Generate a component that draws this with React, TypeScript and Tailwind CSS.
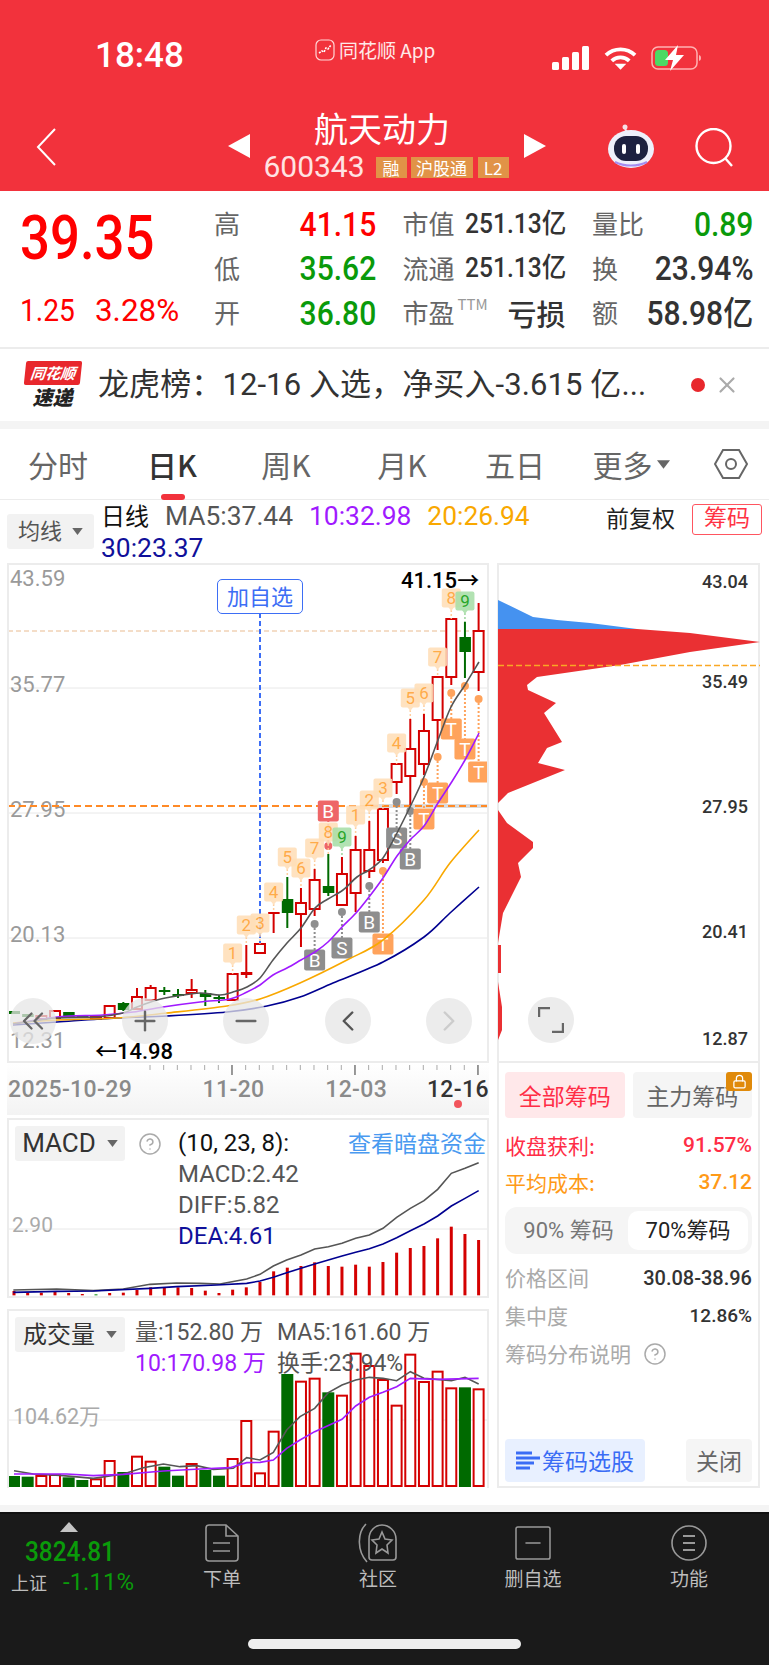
import React from "react";
import { ChevronsLeft, ChevronLeft, ChevronRight, Plus, Minus, CircleHelp, Lock, X } from "lucide-react";

const NUM = "font-['Roboto','Noto_Sans_CJK_SC',sans-serif]";
const xAt = (i: number) => 14 + 13.665 * i;
// chart data was read off 3x crops, so this turns crop coords into page coords
const pts = (list: number[][], ox: number, oy: number) =>
  list.map(([x, y]) => `${ox + x / 3},${oy + y / 3}`).join(" ");
const raw = (list: number[][]) => list.map(([x, y]) => `${x},${y}`).join(" ");
// catmull-rom through the points, the moving averages are drawn as curves
const smooth = (p: number[][]) => {
  let d = `M${p[0][0]} ${p[0][1]}`;
  for (let i = 0; i < p.length - 1; i++) {
    const a = p[i - 1] || p[i];
    const b = p[i];
    const c = p[i + 1];
    const e = p[i + 2] || c;
    d += `C${b[0] + (c[0] - a[0]) / 6} ${b[1] + (c[1] - a[1]) / 6} ${c[0] - (e[0] - b[0]) / 6} ${c[1] - (e[1] - b[1]) / 6} ${c[0]} ${c[1]}`;
  }
  return d;
};

// hi, lo, open/close box top, box bottom, kind
const candles: [number, number, number, number, string][] = [
  [1011, 1014, 1011, 1014, "g"], [1014, 1017, 1014, 1017, "g"], [1016, 1019, 1016, 1019, "r"],
  [1011, 1018, 1011, 1018, "r"], [1012, 1017, 1012, 1017, "g"], [1016, 1018, 1016, 1018, "g"],
  [1017, 1019, 1017, 1019, "r"], [1006, 1018, 1006, 1018, "r"], [1002, 1011, 1003, 1010, "g"],
  [988, 1009, 997, 1009, "r"], [985, 1000, 988, 1000, "r"], [987, 995, 990, 992, "g"],
  [989, 998, 994, 996, "g"], [979, 998, 990, 993, "r"], [990, 1006, 993, 997, "g"],
  [995, 1003, 997, 999, "g"], [974, 1000, 974, 1000, "r"], [945, 978, 972, 975, "f"],
  [944, 953, 944, 953, "r"], [912, 933, 912, 913, "f"], [877, 928, 899, 913, "g"],
  [888, 947, 903, 914, "r"], [869, 916, 880, 909, "r"], [854, 896, 886, 893, "g"],
  [857, 905, 874, 905, "r"], [836, 912, 850, 893, "r"], [821, 878, 850, 871, "r"],
  [809, 863, 809, 860, "r"], [764, 794, 764, 782, "r"], [719, 805, 749, 776, "r"],
  [714, 775, 731, 764, "r"], [677, 750, 677, 720, "r"], [619, 685, 619, 677, "r"],
  [622, 678, 637, 652, "g"], [603, 691, 631, 672, "r"],
];

const ma5 = [[13,1024],[57,1018],[97,1017],[123,1013],[137,1007],[157,1000],[177,996],[200,993],[220,995],[233,992],[247,987],[260,978],[273,960],[287,943],[301,928],[315,908],[328,899],[343,890],[357,877],[369,870],[383,858],[397,833],[410,807],[424,777],[438,740],[451,707],[465,685],[479,662]];
const ma10 = [[13,1024],[57,1017],[103,1015],[133,1012],[163,1007],[200,1002],[230,999],[247,992],[260,985],[273,975],[287,968],[301,960],[315,952],[328,942],[342,927],[356,913],[369,897],[383,878],[397,856],[410,840],[424,826],[438,803],[451,783],[465,760],[479,733]];
const ma20 = [[13,1023],[57,1020],[117,1018],[167,1013],[227,1006],[260,999],[300,983],[347,960],[383,940],[424,900],[450,863],[479,830]];
const ma30 = [[13,1025],[57,1022],[117,1018],[167,1016],[227,1012],[267,1006],[300,997],[333,983],[383,962],[424,937],[450,913],[479,887]];

// candle index, label center y, text
const counts: [number, number, string, boolean?][] = [
  [16, 953, "1"], [17, 925, "2"], [18, 923, "3"], [19, 892, "4"], [20, 857, "5"], [21, 868, "6"],
  [22, 848, "7"], [23, 832, "8"], [24, 837, "9", true], [25, 815, "1"], [26, 800, "2"], [27, 788, "3"],
  [28, 743, "4"], [29, 698, "5"], [30, 693, "6"], [31, 657, "7"], [32, 598, "8"], [33, 601, "9", true],
];

// candle index, tag y, dot y, letter, colour
const tags: [number, number, number, string, string][] = [
  [22, 960, 924, "B", "#8e8e8e"], [24, 948, 912, "S", "#8e8e8e"], [26, 922, 886, "B", "#8e8e8e"],
  [27, 944, 871, "T", "#ffa35c"], [28, 838, 802, "S", "#8e8e8e"], [29, 859, 811, "B", "#8e8e8e"],
  [30, 819, 782, "T", "#ffa35c"], [31, 793, 757, "T", "#ffa35c"], [32, 729, 693, "T", "#ffa35c"],
  [33, 749, 686, "T", "#ffa35c"], [34, 772, 699, "T", "#ffa35c"], [23, 811, 846, "B", "#ee6668"],
];

const macdBars = [543,548,548,546,549,552,553,549,548,540,532,532,532,534,542,549,539,532,516,484,473,468,457,468,470,464,470,456,428,414,408,385,350,372,390];
const diff = [[40,540],[170,537],[280,542],[370,537],[450,523],[530,519],[600,520],[660,522],[740,507],[780,493],[820,468],[860,450],[903,435],[944,417],[985,410],[1026,400],[1067,385],[1108,375],[1149,355],[1190,322],[1231,295],[1272,272],[1313,238],[1354,190],[1395,175],[1436,158]];
const dea = [[40,547],[170,544],[280,543],[450,535],[530,530],[650,525],[740,520],[780,513],[820,502],[860,488],[903,475],[944,462],[985,450],[1026,438],[1067,427],[1108,416],[1149,402],[1190,383],[1231,362],[1272,342],[1313,318],[1354,288],[1395,265],[1436,242]];

const volBars: [number, string][] = [[528,"g"],[530,"g"],[528,"r"],[525,"r"],[532,"g"],[540,"g"],[538,"r"],[483,"r"],[516,"g"],[470,"r"],[485,"r"],[500,"g"],[527,"g"],[492,"r"],[510,"g"],[527,"g"],[477,"r"],[363,"r"],[520,"r"],[395,"r"],[222,"g"],[245,"r"],[236,"r"],[277,"g"],[287,"r"],[161,"r"],[198,"r"],[240,"r"],[317,"r"],[164,"r"],[246,"r"],[215,"r"],[265,"r"],[262,"g"],[268,"r"]];
const volMa5 = [[42,512],[100,522],[180,526],[280,535],[370,522],[430,503],[490,492],[540,500],[590,497],[640,508],[700,505],[740,473],[780,480],[820,457],[860,390],[900,350],[944,325],[985,278],[1026,255],[1067,240],[1108,232],[1149,235],[1190,242],[1231,215],[1272,235],[1354,242],[1395,232],[1436,252]];
const volMa10 = [[42,522],[200,522],[280,527],[370,523],[490,513],[600,507],[690,503],[740,488],[780,487],[820,480],[860,445],[900,420],[944,395],[1026,358],[1067,318],[1108,292],[1149,277],[1190,260],[1231,235],[1313,238],[1436,235]];

const Big = ({ children, color, size = "text-[33px]" }: { children: React.ReactNode; color: string; size?: string }) => (
  <span className={`${NUM} ${size} ${color} inline-block origin-right scale-x-[0.91] leading-none font-medium whitespace-nowrap`}>{children}</span>
);

const StatCell = ({ label, children }: { label: React.ReactNode; children: React.ReactNode }) => (
  <div className="flex items-center justify-between h-[44.5px]">
    <span className="text-[26px] text-[#666] leading-none whitespace-nowrap -mt-[2px]">{label}</span>
    {children}
  </div>
);

const Caret = ({ className }: { className: string }) => (
  <svg viewBox="0 0 12 8" className={className}><polygon points="0,0 12,0 6,8" fill="currentColor" /></svg>
);

const PanelSelect = ({ label, size }: { label: string; size: string }) => (
  <div className={`w-[110px] h-[35px] bg-[#f2f2f2] rounded-[3px] flex items-center justify-center gap-[11px] text-[#333] shrink-0 ${size}`}>
    <span className={NUM}>{label}</span>
    <Caret className="w-[11px] h-[7px] text-[#666]" />
  </div>
);

const KChart = () => (
  <svg viewBox="9 565 478 496" className="absolute inset-0 w-full h-full">
    {[688, 813, 938].map((y) => (
      <line key={y} x1="8" x2="488" y1={y} y2={y} stroke="#e8e8e8" strokeWidth="1" />
    ))}
    <line x1="8" x2="488" y1="631" y2="631" stroke="#e9bb90" strokeWidth="1" strokeDasharray="5 3" />
    <rect x="370" y="804" width="118" height="4" fill="#dcdcdc" />
    <g className={NUM} fontSize="22" fill="#9a9a9a">
      <text x="10" y="586">43.59</text>
      <text x="10" y="692">35.77</text>
      <text x="10" y="817">27.95</text>
      <text x="10" y="942">20.13</text>
      <text x="10" y="1048">12.31</text>
    </g>
    <line x1="8" x2="488" y1="806" y2="806" stroke="#ff8a26" strokeWidth="2" strokeDasharray="7 4" />
    <line x1="260" x2="260" y1="613" y2="944" stroke="#3d6ef5" strokeWidth="2" strokeDasharray="5 3" />

    {candles.map(([hi, lo, top, bot, kind], i) => {
      const x = xAt(i);
      const green = kind === "g";
      const stroke = green ? "#006a00" : "#d40000";
      return (
        <g key={i}>
          <line x1={x} x2={x} y1={hi} y2={top} stroke={stroke} strokeWidth="2" />
          <line x1={x} x2={x} y1={bot} y2={lo} stroke={stroke} strokeWidth="2" />
          {green || kind === "f" ? (
            <rect x={x - 5.5} y={top} width="11.5" height={Math.max(bot - top, 2)} fill={stroke} />
          ) : (
            <rect x={x - 5} y={top} width="10" height={bot - top} fill="#fff" stroke={stroke} strokeWidth="2" />
          )}
        </g>
      );
    })}

    {tags.map(([i, y, dot, letter, color]) => {
      const x = xAt(i);
      return (
        <g key={i}>
          <line x1={x} x2={x} y1={dot} y2={y} stroke={color} strokeWidth="2" strokeDasharray="2 2" />
          <circle cx={x} cy={dot} r="4" fill={color} />
          <rect x={x - 10.5} y={y - 10.5} width="21" height="21" rx="2" fill={color} />
          <text x={x} y={y + 7} textAnchor="middle" fontSize="19" fill="#fff" className={NUM}>{letter}</text>
        </g>
      );
    })}

    <path d={smooth(ma30)} fill="none" stroke="#000090" strokeWidth="1.6" />
    <path d={smooth(ma20)} fill="none" stroke="#f9a800" strokeWidth="1.6" />
    <path d={smooth(ma10)} fill="none" stroke="#a01aff" strokeWidth="1.6" />
    <path d={smooth(ma5)} fill="none" stroke="#555" strokeWidth="1.6" />

    {counts.map(([i, y, n, green]) => {
      const x = xAt(i);
      const bg = green ? "#a8dfa8" : "#ffdfb8";
      return (
        <g key={`${i}-${n}`} opacity="0.88">
          <line x1={x} x2={x} y1={y + 12} y2={candles[i][0]} stroke={green ? "#8fd08f" : "#ffc890"} strokeWidth="1.5" strokeDasharray="2 2" />
          <rect x={x - 9.5} y={y - 9.5} width="19" height="19" rx="2" fill={bg} />
          <polygon points={`${x - 3},${y + 9} ${x + 3},${y + 9} ${x},${y + 13}`} fill={bg} />
          <text x={x} y={y + 6} textAnchor="middle" fontSize="17" fill={green ? "#0a9a0a" : "#ffa030"} className={NUM}>{n}</text>
        </g>
      );
    })}

    <g className={NUM} fontSize="22" fill="#000" fontWeight="500">
      <text x="401" y="588">41.15→</text>
      <text x="95" y="1059">←14.98</text>
    </g>
  </svg>
);

const roundBtn = "absolute top-[433px] w-[46px] h-[46px] rounded-full bg-[#e6e6e6]/75 flex items-center justify-center";

const Chips = () => (
  <svg viewBox="499 565 259 496" className="absolute inset-0 w-full h-full overflow-visible">
    <polygon points={raw([[498,600],[533,617],[557,620],[590,623],[637,629],[498,629]])} fill="#4592f0" />
    <polygon points={raw([[498,629],[637,629],[690,633],[760,642],[690,652],[620,665],[537,677],[527,685],[528,690],[556,703],[544,713],[562,742],[547,748],[538,763],[565,770],[508,793],[498,803]])} fill="#ea3033" />
    <polygon points={raw([[498,810],[507,823],[533,842],[533,848],[518,863],[521,877],[503,913],[498,943]])} fill="#ea3033" />
    <polygon points={raw([[498,945],[501,945],[501,973],[498,973]])} fill="#ea3033" />
    <polygon points={raw([[498,982],[502,1007],[502,1030],[498,1040]])} fill="#ea3033" />
    <line x1="498" x2="760" y1="665.5" y2="665.5" stroke="#f9a824" strokeWidth="1.5" strokeDasharray="6 3" />
    <g className={NUM} fontSize="18" fill="#333" textAnchor="end" fontWeight="500">
      <text x="748" y="588">43.04</text>
      <text x="748" y="688">35.49</text>
      <text x="748" y="813">27.95</text>
      <text x="748" y="938">20.41</text>
      <text x="748" y="1045">12.87</text>
    </g>
  </svg>
);

const TabItem = ({ label, children }: { label: string; children: React.ReactNode }) => (
  <div className="flex flex-col items-center w-[120px]">
    <div className="h-[42px] flex items-center justify-center">{children}</div>
    <span className="mt-[1px] text-[19px] leading-[26px] text-[#bdbdbd]">{label}</span>
  </div>
);

export default function App() {
  return (
    <div className="w-[769px] h-[1665px] overflow-hidden bg-white flex flex-col font-['Noto_Sans_CJK_SC',sans-serif]">
      {/* red header */}
      <div className="h-[191px] bg-[#f2323c] text-white shrink-0 flex flex-col">
        <div className="h-[102px] flex items-start">
          <span className={`${NUM} ml-[95px] mt-[36px] text-[35px] leading-[40px] font-medium w-[89px]`}>18:48</span>
          <div className="ml-[131px] mt-[38px] flex items-center gap-[4px] text-[#ffe9e9] w-[122px] shrink-0">
            <svg viewBox="0 0 20 22" className="w-[20px] h-[22px] shrink-0">
              <rect x="1" y="1" width="18" height="20" rx="5" fill="#f2323c" stroke="#ffd7d7" strokeWidth="1.2" />
              <path d="M4 14l3-2 2 1 2-4 2 1 3-4" stroke="#fff" strokeWidth="1.6" fill="none" strokeDasharray="2 1" />
            </svg>
            <span className="text-[19px] leading-[24px] whitespace-nowrap">同花顺 App</span>
          </div>
          <div className="ml-[115px] mt-[45px] flex items-center">
            <svg viewBox="0 0 38 24" className="w-[38px] h-[24px]">
              <rect x="0" y="16" width="7" height="8" rx="1.5" fill="#fff" />
              <rect x="10" y="11" width="7" height="13" rx="1.5" fill="#fff" />
              <rect x="20" y="6" width="7" height="18" rx="1.5" fill="#fff" />
              <rect x="30" y="0" width="7" height="24" rx="1.5" fill="#fff" />
            </svg>
            <svg viewBox="0 0 34 24" className="ml-[14px] w-[33px] h-[24px]">
              <path d="M2 9a22 22 0 0 1 30 0" stroke="#fff" strokeWidth="4" fill="none" />
              <path d="M8 15a13 13 0 0 1 18 0" stroke="#fff" strokeWidth="4" fill="none" />
              <polygon points="17,24 11,18 23,18" fill="#fff" />
            </svg>
            <svg viewBox="0 0 52 26" className="ml-[14px] w-[52px] h-[26px]">
              <rect x="1" y="2" width="45" height="22" rx="6" fill="none" stroke="#ffb3b3" strokeWidth="1.5" />
              <rect x="4" y="5" width="13" height="16" rx="3.5" fill="#4cd964" />
              <path d="M48 10v6a3 3 0 0 0 2-3 3 3 0 0 0-2-3z" fill="#ffb3b3" />
              <polygon points="27,0 14,15 22,15 19,26 33,10 25,10" fill="#fff" />
            </svg>
          </div>
        </div>
        <div className="flex-1 flex items-start">
          <svg viewBox="0 0 20 38" className="ml-[36px] mt-[26px] w-[20px] h-[38px] shrink-0">
            <path d="M19 1L2 19l17 18" fill="none" stroke="#fff" strokeWidth="2" />
          </svg>
          <svg viewBox="0 0 22 24" className="ml-[172px] mt-[32px] w-[22px] h-[24px] shrink-0"><polygon points="22,0 22,24 0,12" fill="#fff" /></svg>
          <div className="ml-[14px] w-[244px] shrink-0 flex flex-col items-center">
            <span className="text-[34px] leading-[38px] -ml-[8px] mt-[7px] whitespace-nowrap">航天动力</span>
            <div className="flex items-center mt-[8px]">
              <span className={`${NUM} text-[30px] leading-[24px] text-[#ffe3e3]`}>600343</span>
              <span className="ml-[11px] h-[21px] w-[31px] bg-[#e19347] text-[17px] leading-[21px] text-center">融</span>
              <span className="ml-[4px] h-[21px] w-[62px] bg-[#e19347] text-[17px] leading-[21px] text-center">沪股通</span>
              <span className="ml-[5px] h-[21px] w-[31px] bg-[#e19347] text-[17px] leading-[21px] text-center">L2</span>
            </div>
          </div>
          <svg viewBox="0 0 22 24" className="ml-[16px] mt-[32px] w-[22px] h-[24px] shrink-0"><polygon points="0,0 0,24 22,12" fill="#fff" /></svg>
          <svg viewBox="0 0 48 44" className="ml-[61px] mt-[22px] w-[48px] h-[44px] shrink-0">
            <circle cx="18" cy="3" r="2.5" fill="#f6dfe6" />
            <path d="M18 5c1 2 2 3 4 4" stroke="#f6dfe6" strokeWidth="2" fill="none" />
            <ellipse cx="24" cy="25" rx="23" ry="19" fill="#eef0fb" />
            <rect x="7" y="12" width="34" height="25" rx="12" fill="#1d2140" />
            <rect x="15" y="20" width="4" height="10" rx="2" fill="#fff" />
            <rect x="29" y="20" width="4" height="10" rx="2" fill="#fff" />
            <path d="M8 38a24 14 0 0 0 32 0" stroke="#a58cf0" strokeWidth="2" fill="none" />
          </svg>
          <svg viewBox="0 0 40 40" className="ml-[40px] mt-[26px] w-[40px] h-[40px] shrink-0">
            <circle cx="18.5" cy="18" r="17" fill="none" stroke="#fff" strokeWidth="2.4" />
            <line x1="30" y1="30" x2="37" y2="38" stroke="#fff" strokeWidth="2.4" />
          </svg>
        </div>
      </div>

      {/* quote stats */}
      <div className="h-[156px] flex shrink-0">
        <div className="w-[214px] pl-[20px] shrink-0">
          <div className="mt-[21px] h-[52px] flex items-center">
            <span className={`${NUM} text-[62px] leading-none text-[#ff0000] font-medium inline-block origin-left scale-x-[0.85]`}>39.35</span>
          </div>
          <div className="mt-[31px] flex items-center h-[30px]">
            <span className={`${NUM} text-[32px] leading-none text-[#ff0000] inline-block origin-left scale-x-[0.88] w-[75px]`}>1.25</span>
            <span className={`${NUM} text-[32px] leading-none text-[#ff0000] inline-block origin-left scale-x-[0.98] whitespace-nowrap`}>3.28%</span>
          </div>
        </div>
        <div className="grid grid-cols-[162px_163px_161px] gap-x-[26.5px] pt-[11px] content-start">
          <StatCell label="高"><Big color="text-[#ff0000]">41.15</Big></StatCell>
          <StatCell label="市值"><Big color="text-[#333]" size="text-[27px]">251.13亿</Big></StatCell>
          <StatCell label="量比"><Big color="text-[#0a9a0a]">0.89</Big></StatCell>
          <StatCell label="低"><Big color="text-[#0a9a0a]">35.62</Big></StatCell>
          <StatCell label="流通"><Big color="text-[#333]" size="text-[27px]">251.13亿</Big></StatCell>
          <StatCell label="换"><Big color="text-[#333]">23.94%</Big></StatCell>
          <StatCell label="开"><Big color="text-[#0a9a0a]">36.80</Big></StatCell>
          <StatCell label={<>市盈<sup className="text-[15px] text-[#999] ml-[3px] align-[6px]">TTM</sup></>}>
            <span className="text-[29px] leading-none text-[#333] font-medium">亏损</span>
          </StatCell>
          <StatCell label="额"><Big color="text-[#333]">58.98亿</Big></StatCell>
        </div>
      </div>
      <div className="h-[2px] bg-[#ececec] shrink-0" />

      {/* news ticker */}
      <div className="h-[72px] flex items-center shrink-0">
        <div className="ml-[25px] w-[55px] flex flex-col items-center shrink-0">
          <div className="w-[56px] h-[24px] bg-[#e8272c] rounded-[2px] -skew-x-6 text-white text-[15px] leading-[24px] italic font-bold text-center">同花顺</div>
          <div className="text-[20px] leading-[24px] font-black italic text-[#222]">速递</div>
        </div>
        <span className={`${NUM} ml-[18px] w-[560px] shrink-0 text-[31px] tracking-[0.1px] text-[#333] whitespace-nowrap overflow-hidden`}>龙虎榜：12-16 入选，净买入-3.615 亿...</span>
        <span className="ml-[33px] w-[14px] h-[14px] rounded-full bg-[#e8272c] shrink-0" />
        <X className="ml-[9px] w-[26px] h-[26px] text-[#aaa] shrink-0" strokeWidth={2} />
      </div>
      <div className="h-[8px] bg-[#f4f4f4] shrink-0" />

      {/* period tabs */}
      <div className="h-[71px] grid grid-cols-[116px_112px_116px_116px_110px_122px_77px] border-b border-[#ececec] shrink-0 items-center text-center text-[30px] text-[#666]">
        <span>分时</span>
        <div className="relative text-[#333] font-medium">
          日K
          <span className="absolute left-[45px] -bottom-[13px] w-[24px] h-[6px] rounded-full bg-[#f2323c]" />
        </div>
        <span>周K</span>
        <span>月K</span>
        <span>五日</span>
        <div className="flex items-center justify-center gap-[4px]">更多<Caret className="w-[13px] h-[9px] text-[#666]" /></div>
        <div className="flex justify-center">
          <svg viewBox="0 0 34 32" className="w-[34px] h-[32px]">
            <polygon points="9,2 25,2 33,16 25,30 9,30 1,16" fill="none" stroke="#666" strokeWidth="2" />
            <circle cx="17" cy="16" r="5" fill="none" stroke="#666" strokeWidth="2" />
          </svg>
        </div>
      </div>

      {/* MA legend row */}
      <div className={`${NUM} h-[63px] relative flex shrink-0 text-[26.4px] leading-[31px]`}>
        <div className="ml-[7px] mt-[14px] w-[87px] h-[35px] bg-[#f2f2f2] rounded-[3px] flex items-center justify-center gap-[10px] text-[22px] text-[#555] shrink-0">
          均线<Caret className="w-[11px] h-[7px] text-[#666]" />
        </div>
        <div className="ml-[7px] w-[460px] pt-[1px]">
          <span className="text-[#111] text-[24px]">日线</span>
          <span className="ml-[16px] text-[#555]">MA5:37.44</span>
          <span className="ml-[16px] text-[#a01aff]">10:32.98</span>
          <span className="ml-[16px] text-[#f9a800]">20:26.94</span>
          <div className="text-[#10109a] w-fit">30:23.37</div>
        </div>
        <span className="absolute left-[606px] top-[4px] text-[23px] text-[#222] leading-[31px]">前复权</span>
        <span className="absolute left-[692px] top-[4px] w-[70px] h-[31px] border border-[#ff5560] rounded-[3px] text-[23px] leading-[28px] text-center text-[#ff3344]">筹码</span>
      </div>

      {/* charts */}
      <div className="flex items-start pl-[7px] gap-[8px] shrink-0">
        <div className="w-[482px] shrink-0">
          <div className="relative h-[500px] border-2 border-[#ececec]">
            <KChart />
            <div className={`${roundBtn} left-[1px]`}><ChevronsLeft className="w-[36px] h-[36px] text-[#666]" strokeWidth={1.5} /></div>
            <div className={`${roundBtn} left-[113px]`}><Plus className="w-[32px] h-[32px] text-[#666]" strokeWidth={1.8} /></div>
            <div className={`${roundBtn} left-[214px]`}><Minus className="w-[32px] h-[32px] text-[#666]" strokeWidth={1.8} /></div>
            <div className={`${roundBtn} left-[316px]`}><ChevronLeft className="w-[34px] h-[34px] text-[#555]" strokeWidth={1.7} /></div>
            <div className={`${roundBtn} left-[417px]`}><ChevronRight className="w-[34px] h-[34px] text-[#ccc]" strokeWidth={1.7} /></div>
            <div className="absolute left-[208px] top-[14px] w-[86px] h-[35px] bg-white border border-[#3d6ef5] rounded-[5px] text-[22px] leading-[31px] text-center text-[#3d6ef5]">加自选</div>
          </div>
          <div className="h-[52px] relative bg-gradient-to-b from-white to-[#f3f3f3]">
            <svg viewBox="0 0 482 14" className="absolute inset-x-0 top-[2px] w-full h-[14px]">
              {Array.from({ length: 25 }, (_, i) => {
                const x = 143 + 13.665 * i;
                const major = i === 6 || i === 15 || i === 24;
                return <line key={i} x1={x} x2={x} y1="0" y2={major ? 10 : 5} stroke={major ? "#777" : "#aaa"} strokeWidth={major ? 1.5 : 1} />;
              })}
            </svg>
            <div className={`${NUM} absolute inset-x-0 top-[14px] h-[26px] text-[23px] leading-[26px] font-medium text-[#8a8a8a] flex whitespace-nowrap`}>
              <span className="ml-[1px] w-[195px] tracking-[0.4px]">2025-10-29</span>
              <span className="w-[123px] tracking-[0.4px]">11-20</span>
              <span className="w-[102px] tracking-[0.4px]">12-03</span>
              <span className="text-[#333] tracking-[0.4px]">12-16</span>
            </div>
            <span className="absolute left-[447px] top-[37px] w-[8px] h-[8px] rounded-full bg-[#f2555c]" />
          </div>

          {/* MACD */}
          <div className="relative h-[180px] mt-[3px] border-2 border-[#ececec] overflow-hidden">
            <svg viewBox="9 1120 478 176" className="absolute inset-0 w-full h-full">
              <line x1="8" x2="488" y1="1229" y2="1229" stroke="#e8e8e8" />
              <text x="12" y="1232" fontSize="21" fill="#aaa" className={NUM}>2.90</text>
              {macdBars.map((top, i) => (
                <rect key={i} x={xAt(i) - 1.5} y={1110 + top / 3} width="3" height={(556 - top) / 3} fill={i === 6 ? "#0a8a0a" : "#d40000"} />
              ))}
              <polyline points={pts(diff, 0, 1110)} fill="none" stroke="#555" strokeWidth="1.6" />
              <polyline points={pts(dea, 0, 1110)} fill="none" stroke="#000090" strokeWidth="1.6" />
            </svg>
            <div className="relative flex items-start pl-[6px] pt-[6px]">
              <PanelSelect label="MACD" size="text-[26px]" />
              <CircleHelp className="ml-[13px] mt-[6px] w-[24px] h-[24px] text-[#aaa] shrink-0" strokeWidth={1.5} />
              <div className={`${NUM} ml-[16px] w-[170px] text-[24px] leading-[31px] text-[#555] pt-[2px]`}>
                <div className="text-[#111]">(10, 23, 8):</div>
                <div>MACD:2.42</div>
                <div>DIFF:5.82</div>
                <div className="text-[#10109a]">DEA:4.61</div>
              </div>
              <span className="text-[23px] leading-[33px] text-[#4a9af0] whitespace-nowrap">查看暗盘资金</span>
            </div>
          </div>

          {/* volume */}
          <div className="relative h-[179px] mt-[11px] border-2 border-[#ececec] border-b-0 overflow-hidden">
            <svg viewBox="9 1311 478 177" className="absolute inset-0 w-full h-full">
              <line x1="8" x2="488" y1="1420" y2="1420" stroke="#e8e8e8" />
              <text x="13" y="1424" fontSize="21.5" fill="#aaa" className={NUM}>104.62万</text>
              {volBars.map(([top, kind], i) => {
                const y = 1300 + top / 3;
                return kind === "g" ? (
                  <rect key={i} x={xAt(i) - 6} y={y} width="12" height={1487 - y} fill="#006a00" />
                ) : (
                  <rect key={i} x={xAt(i) - 5} y={y} width="10" height={1486 - y} fill="#fff" stroke="#d40000" strokeWidth="2" />
                );
              })}
              <polyline points={pts(volMa5, 0, 1300)} fill="none" stroke="#555" strokeWidth="1.6" />
              <polyline points={pts(volMa10, 0, 1300)} fill="none" stroke="#a01aff" strokeWidth="1.6" />
            </svg>
            <div className="relative flex items-start pl-[6px] pt-[6px]">
              <PanelSelect label="成交量" size="text-[24px]" />
              <div className={`${NUM} ml-[10px] text-[23px] leading-[31px] text-[#555] whitespace-nowrap`}>
                <div className="flex"><span className="w-[142px]">量:152.80 万</span><span>MA5:161.60 万</span></div>
                <div className="flex"><span className="w-[142px] text-[#a01aff]">10:170.98 万</span><span>换手:23.94%</span></div>
              </div>
            </div>
          </div>
        </div>

        {/* chips panel */}
        <div className="w-[263px] h-[925px] border-2 border-[#ececec] shrink-0 flex flex-col">
          <div className="relative h-[498px] shrink-0 border-b-2 border-[#ececec]">
            <Chips />
            <div className="absolute left-[29px] top-[432px] w-[46px] h-[46px] rounded-full bg-[#ececec] flex items-center justify-center">
              <svg viewBox="0 0 26 26" className="w-[26px] h-[26px]">
                <path d="M1 10V1h11M25 16v9H14" fill="none" stroke="#666" strokeWidth="2.4" />
              </svg>
            </div>
          </div>
          <div className="flex-1 flex flex-col px-[6px]">
            <div className="flex gap-[8px] mt-[9px]">
              <div className="w-[120px] h-[46px] bg-[#ffe8ea] rounded-[4px] text-[23px] leading-[46px] text-center text-[#ff2d46]">全部筹码</div>
              <div className="relative w-[120px] h-[46px] bg-[#f5f5f5] rounded-[4px] text-[23px] leading-[46px] text-center text-[#666]">
                主力筹码
                <div className="absolute right-0 top-0 w-[26px] h-[19px] bg-[#e08a0a] rounded-[3px] flex items-center justify-center">
                  <Lock className="w-[15px] h-[15px] text-white" strokeWidth={2} />
                </div>
              </div>
            </div>
            <div className="flex justify-between mt-[9px] h-[37px] items-center text-[21px] text-[#ff2d46]"><span>收盘获利:</span><span className={`${NUM} font-medium`}>91.57%</span></div>
            <div className="flex justify-between h-[37px] items-center text-[21px] text-[#ff9a17]"><span>平均成本:</span><span className={`${NUM} font-medium`}>37.12</span></div>
            <div className="mt-[6px] h-[47px] bg-[#f5f5f5] rounded-[12px] flex items-center p-[4px]">
              <span className={`${NUM} flex-1 text-center text-[22px] text-[#777] whitespace-nowrap`}>90% 筹码</span>
              <span className={`${NUM} w-[120px] h-[39px] bg-white rounded-[10px] text-center text-[22px] leading-[39px] text-[#222] whitespace-nowrap`}>70%筹码</span>
            </div>
            <div className="flex justify-between mt-[5px] h-[38px] items-center text-[21px] text-[#aaa]"><span>价格区间</span><span className={`${NUM} text-[20px] font-medium text-[#333]`}>30.08-38.96</span></div>
            <div className="flex justify-between h-[38px] items-center text-[21px] text-[#aaa]"><span>集中度</span><span className={`${NUM} text-[19px] font-medium text-[#333]`}>12.86%</span></div>
            <div className="flex items-center h-[38px] text-[21px] text-[#aaa] gap-[12px]"><span>筹码分布说明</span><CircleHelp className="w-[24px] h-[24px]" strokeWidth={1.5} /></div>
            <div className="flex justify-between mt-[66px]">
              <div className="w-[140px] h-[43px] bg-[#e8f0ff] rounded-[4px] flex items-center justify-center gap-[2px] text-[23px] text-[#3a6cf5]">
                <svg viewBox="0 0 24 20" className="w-[24px] h-[20px]"><path d="M0 2h16M0 7h24M0 12h18M0 17h14" stroke="#3a6cf5" strokeWidth="3" /></svg>
                筹码选股
              </div>
              <div className="w-[66px] h-[43px] bg-[#f5f5f5] rounded-[4px] text-center text-[23px] leading-[43px] text-[#666]">关闭</div>
            </div>
          </div>
        </div>
      </div>

      <div className="flex-1" />
      <div className="h-[7px] bg-[#f4f4f4] shrink-0" />

      {/* bottom bar */}
      <div className="h-[153px] bg-[#1a1a1a] border-t-2 border-[#111] shrink-0 flex flex-col text-[#bdbdbd]">
        <div className="flex items-start">
          <div className="w-[160px] pl-[11px] shrink-0">
            <svg viewBox="0 0 18 10" className="ml-[49px] mt-[8px] w-[18px] h-[10px]"><polygon points="9,0 18,10 0,10" fill="#c4c4c4" /></svg>
            <div className={`${NUM} ml-[14px] mt-[3px] text-[28px] leading-[34px] text-[#0a9b0a] font-medium inline-block origin-left scale-x-[0.87]`}>3824.81</div>
            <div className="flex items-center h-[30px] -mt-[2px]">
              <span className="text-[18px]">上证</span>
              <span className={`${NUM} ml-[16px] text-[24px] text-[#0a9b0a] whitespace-nowrap`}>-1.11%</span>
            </div>
          </div>
          <div className="flex pt-[8px]">
            <div className="ml-[2px]">
              <TabItem label="下单">
                <svg viewBox="0 0 34 38" className="w-[34px] h-[38px]">
                  <path d="M4 1h17l12 11v22a3 3 0 0 1-3 3H4a3 3 0 0 1-3-3V4a3 3 0 0 1 3-3z M21 1v11h12" fill="none" stroke="#999" strokeWidth="1.6" />
                  <path d="M8 19h17M8 27h17" stroke="#999" strokeWidth="1.6" />
                </svg>
              </TabItem>
            </div>
            <div className="ml-[36px]">
              <TabItem label="社区">
                <svg viewBox="0 0 40 40" className="w-[40px] h-[40px]">
                  <path d="M8 1C-1 10-1 28 9 39" fill="none" stroke="#999" strokeWidth="1.6" />
                  <path d="M11 34V16C11 8 17 2 24 2s14 6 14 14v18a3 3 0 0 1-3 3H14a3 3 0 0 1-3-3z" fill="none" stroke="#999" strokeWidth="1.6" />
                  <polygon points="24,9 27,16 34,17 29,22 30,30 24,26 18,30 19,22 14,17 21,16" fill="none" stroke="#999" strokeWidth="1.6" />
                </svg>
              </TabItem>
            </div>
            <div className="ml-[35px]">
              <TabItem label="删自选">
                <svg viewBox="0 0 38 36" className="w-[38px] h-[34px]">
                  <rect x="1" y="1" width="36" height="34" rx="2" fill="none" stroke="#999" strokeWidth="1.6" />
                  <path d="M11 18h16" stroke="#999" strokeWidth="1.6" />
                </svg>
              </TabItem>
            </div>
            <div className="ml-[36px]">
              <TabItem label="功能">
                <svg viewBox="0 0 36 36" className="w-[36px] h-[36px]">
                  <ellipse cx="18" cy="18" rx="17" ry="17" fill="none" stroke="#999" strokeWidth="1.6" />
                  <path d="M12 11h12M12 18h12M12 25h12" stroke="#999" strokeWidth="2" />
                </svg>
              </TabItem>
            </div>
          </div>
        </div>
        <div className="mt-auto mb-[16px] ml-[248px] w-[273px] h-[10px] rounded-full bg-[#eeeeee]" />
      </div>
    </div>
  );
}
